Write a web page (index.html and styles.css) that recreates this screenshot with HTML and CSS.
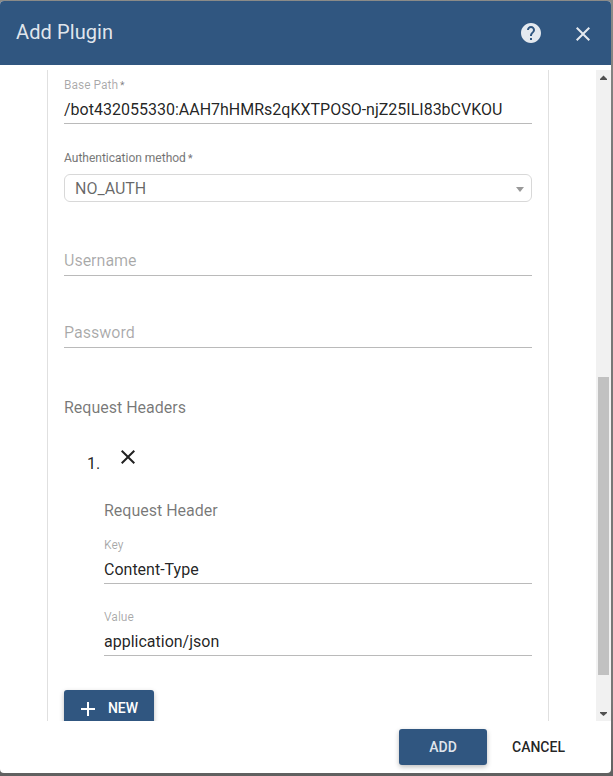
FILE: index.html
```html
<!DOCTYPE html>
<html lang="en">
<head>
<meta charset="utf-8">
<title>Add Plugin</title>
<link rel="stylesheet" href="styles.css">
</head>
<body>
<div class="dialog">
  <header class="toolbar">
    <h2 class="title">Add Plugin</h2>
    <svg class="icon help" viewBox="0 0 24 24"><path d="M12 2C6.48 2 2 6.48 2 12s4.480 10 10 10 10-4.480 10-10S17.520 2 12 2zm1 17h-2v-2h2v2zm2.070-7.750l-.9.920C13.450 12.900 13 13.500 13 15h-2v-.5c0-1.100.45-2.100 1.170-2.830l1.240-1.260c.37-.36.59-.86.59-1.410 0-1.100-.9-2-2-2s-2 .9-2 2H8c0-2.210 1.790-4 4-4s4 1.790 4 4c0 .88-.36 1.680-.93 2.250z"/></svg>
    <svg class="icon" viewBox="0 0 24 24"><path d="M19 6.410L17.590 5 12 10.590 6.410 5 5 6.410 10.590 12 5 17.590 6.410 19 12 13.410 17.590 19 19 17.590 13.410 12z"/></svg>
  </header>
  <div class="content">
    <div class="pane">
      <section class="panel">
        <div class="field first">
          <label class="label">Base Path<span class="star">*</span></label>
          <div class="input">/bot432055330:AAH7hHMRs2qKXTPOSO-njZ25ILI83bCVKOU</div>
        </div>
        <div class="select-field">
          <label class="label dark">Authentication method<span class="star">*</span></label>
          <div class="select"><span>NO_AUTH</span><svg class="caret" viewBox="0 0 8 5"><path d="M0 0h8L4 5z"/></svg></div>
        </div>
        <div class="input placeholder username">Username</div>
        <div class="input placeholder password">Password</div>
        <h3 class="group-title">Request Headers</h3>
        <div class="item">
          <span class="number">1.</span>
          <svg class="icon remove" viewBox="0 0 24 24"><path d="M19 6.410L17.590 5 12 10.590 6.410 5 5 6.410 10.590 12 5 17.590 6.410 19 12 13.410 17.590 19 19 17.590 13.410 12z"/></svg>
        </div>
        <div class="entry">
          <h4 class="entry-title">Request Header</h4>
          <div class="field key">
            <label class="label">Key</label>
            <div class="input">Content-Type</div>
          </div>
          <div class="field value">
            <label class="label">Value</label>
            <div class="input">application/json</div>
          </div>
        </div>
        <div class="button new"><svg class="plus" viewBox="0 0 14 14"><path d="M6 0h2v6h6v2H8v6H6V8H0V6h6z"/></svg><span>NEW</span></div>
      </section>
    </div>
    <div class="scrollbar">
      <svg class="arrow" viewBox="0 0 15 17"><path d="M4 10h7v-1L7.500 5.500 4 9z"/></svg>
      <div class="thumb"></div>
      <svg class="arrow down" viewBox="0 0 15 17"><path d="M4 8h7v1L7.500 12 4 9z"/></svg>
    </div>
  </div>
  <footer class="actions">
    <div class="button add">ADD</div>
    <div class="button cancel">CANCEL</div>
  </footer>
</div>
</body>
</html>
```
FILE: styles.css
```css
* { box-sizing: border-box; }
html, body { height: 100%; margin: 0; }
body {
  overflow: hidden;
  padding-top: 1px;
  background: linear-gradient(#8b8b88 0, #777 180px, #777 700px, #606060 776px);
  font: 16px/20px Roboto, sans-serif;
  color: rgba(0, 0, 0, .87);
}
h2, h3, h4 { margin: 0; font-weight: 400; }
svg { display: block; flex: none; }
.dialog {
  display: flex;
  flex-direction: column;
  width: 611px;
  height: 772px;
  overflow: hidden;
  border-radius: 4px;
  background: #fff;
}
.toolbar {
  display: flex;
  align-items: center;
  flex: none;
  height: 64px;
  padding: 0 16px;
  background: #305680;
  color: rgba(255, 255, 255, .87);
}
.title { flex: 1; padding-bottom: 2px; font-size: 20px; line-height: 24px; letter-spacing: .1px; }
.icon { width: 24px; height: 24px; fill: currentColor; }
.help { margin-right: 28px; }
.toolbar .icon:last-child { margin-top: 2px; }
.content { display: flex; flex: none; height: 651px; margin-top: 5px; overflow: hidden; }
.pane { flex: 1; height: 651px; overflow: hidden; padding: 0 47px; }
.panel {
  width: 502px;
  height: 700px;
  padding: 8px 16px 0;
  border: solid #e0e0e0;
  border-width: 0 1px;
}
.label { display: block; font-size: 12px; line-height: 14px; color: rgba(0, 0, 0, .34); }
.label.dark { color: rgba(0, 0, 0, .5); -webkit-text-stroke: .15px; }
.star { margin-left: 2px; font-size: 10.5px; line-height: 1; color: rgba(0, 0, 0, .5); }
.input { height: 30px; padding-top: 5px; border-bottom: 1px solid #bababa; }
.field .input { margin-top: 2px; padding-top: 6px; }
.select-field { margin-top: 27px; }
.select {
  display: flex;
  align-items: center;
  justify-content: space-between;
  height: 28px;
  margin-top: 9px;
  padding: 1px 7px 0 10px;
  border: 1px solid #d8d8d8;
  border-radius: 6px;
  color: rgba(0, 0, 0, .6);
}
.select span { padding-top: 1px; }
.caret { width: 8px; height: 5px; margin-top: 2px; fill: #999; }
.placeholder { color: rgba(0, 0, 0, .34); }
.username { margin-top: 44px; }
.password { margin-top: 42px; }
.group-title { margin-top: 50px; font-size: 16px; color: rgba(0, 0, 0, .54); }
.item { display: flex; height: 40px; margin-top: 27px; padding-left: 23px; }
.number { width: 29px; padding-top: 9px; }
.entry { margin-left: 40px; }
.entry-title { margin-top: 16px; font-size: 16px; color: rgba(0, 0, 0, .54); }
.key { margin-top: 17px; }
.value { margin-top: 26px; }
.button {
  display: flex;
  align-items: center;
  justify-content: center;
  height: 36px;
  border-radius: 3px;
  font-size: 14px;
  font-weight: 500;
}
.new, .add { background: #305680; box-shadow: 0 2px 5px rgba(0, 0, 0, .26); }
.new { gap: 13px; width: 90px; margin-top: 34px; padding-left: 1px; color: #fff; }
.plus { width: 14px; height: 14px; margin-top: 2px; fill: currentColor; }
.scrollbar { width: 15px; height: 651px; flex: none; background: #f1f1f1; }
.arrow { width: 15px; height: 17px; fill: #505050; }
.thumb { width: 11px; height: 298px; margin: 290px 0 29px 2px; background: #c1c1c1; }
.actions { display: flex; align-items: center; justify-content: flex-end; gap: 16px; flex: 1; padding-right: 36px; }
.add { width: 88px; color: rgba(255, 255, 255, .87); }
.cancel { width: 72px; padding-right: 1px; }
```
